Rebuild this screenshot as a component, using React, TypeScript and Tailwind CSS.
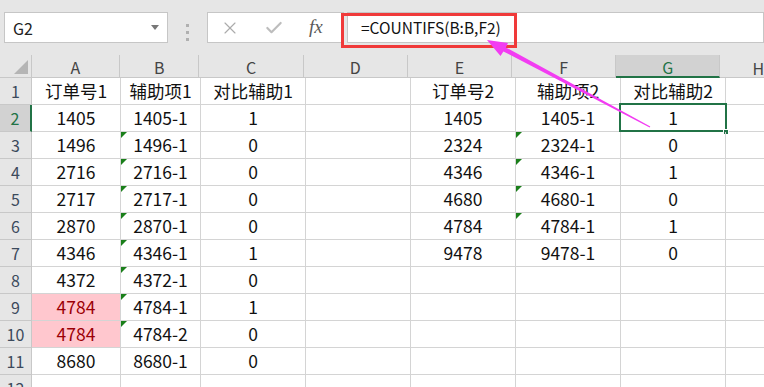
import { X, Check } from "lucide-react";

const cols = [
  { key: "A", w: "w-[89px]" },
  { key: "B", w: "w-[80px]" },
  { key: "C", w: "w-[105px]" },
  { key: "D", w: "w-[105px]" },
  { key: "E", w: "w-[105px]" },
  { key: "F", w: "w-[105px]" },
  { key: "G", w: "w-[105px]" },
];

type Cell = { v?: string; tri?: boolean; bad?: boolean; sel?: boolean };

const rows: Cell[][] = [
  [{ v: "订单号1" }, { v: "辅助项1" }, { v: "对比辅助1" }, {}, { v: "订单号2" }, { v: "辅助项2" }, { v: "对比辅助2" }],
  [{ v: "1405" }, { v: "1405-1" }, { v: "1" }, {}, { v: "1405" }, { v: "1405-1" }, { v: "1", sel: true }],
  [{ v: "1496" }, { v: "1496-1", tri: true }, { v: "0" }, {}, { v: "2324" }, { v: "2324-1", tri: true }, { v: "0" }],
  [{ v: "2716" }, { v: "2716-1", tri: true }, { v: "0" }, {}, { v: "4346" }, { v: "4346-1", tri: true }, { v: "1" }],
  [{ v: "2717" }, { v: "2717-1", tri: true }, { v: "0" }, {}, { v: "4680" }, { v: "4680-1", tri: true }, { v: "0" }],
  [{ v: "2870" }, { v: "2870-1", tri: true }, { v: "0" }, {}, { v: "4784" }, { v: "4784-1", tri: true }, { v: "1" }],
  [{ v: "4346" }, { v: "4346-1", tri: true }, { v: "1" }, {}, { v: "9478" }, { v: "9478-1" }, { v: "0" }],
  [{ v: "4372" }, { v: "4372-1", tri: true }, { v: "0" }, {}, {}, {}, {}],
  [{ v: "4784", bad: true }, { v: "4784-1", tri: true }, { v: "1" }, {}, {}, {}, {}],
  [{ v: "4784", bad: true }, { v: "4784-2", tri: true }, { v: "0" }, {}, {}, {}, {}],
  [{ v: "8680" }, { v: "8680-1" }, { v: "0" }, {}, {}, {}, {}],
  [{}, {}, {}, {}, {}, {}, {}],
];

export default function App() {
  return (
    <div className="relative w-[764px] h-[387px] overflow-hidden bg-white text-[#111] font-['Noto_Sans_CJK_SC','Noto_Sans',sans-serif]">
      {/* formula bar */}
      <div className="flex h-[55px] bg-[#e6e6e6] pt-[12px] pl-[4px]">
        <div className="relative flex h-[31px] w-[164px] items-center border border-[#c6c6c6] bg-white pl-[8px] text-[16px] text-[#222]">
          G2
          <span className="absolute right-[8px] top-[12px] h-0 w-0 border-x-[4px] border-t-[5px] border-x-transparent border-t-[#777]" />
        </div>
        <div className="flex w-[39px] flex-col items-center justify-center gap-[4px] pb-[2px]">
          <span className="h-[3px] w-[3px] bg-[#b0b0b0]" />
          <span className="h-[3px] w-[3px] bg-[#b0b0b0]" />
          <span className="h-[3px] w-[3px] bg-[#b0b0b0]" />
        </div>
        <div className="flex h-[31px] w-[137px] items-center border border-[#c6c6c6] bg-white">
          <X className="ml-[12px] h-[20px] w-[20px] text-[#ababab]" strokeWidth={1.4} />
          <Check className="ml-[24px] h-[20px] w-[20px] text-[#bdbdbd]" strokeWidth={2.6} />
          <span className="ml-[25px] font-['Liberation_Serif',serif] text-[19px] italic text-[#5a5a5a]">
            fx
          </span>
        </div>
        <div className="ml-[3px] flex h-[31px] flex-1 items-center border border-[#c6c6c6] bg-white pl-[13px] text-[15.5px] text-[#111]">
          =COUNTIFS(B:B,F2)
        </div>
      </div>

      {/* column headers */}
      <div className="flex h-[23px] bg-[#e6e6e6] text-[16px] text-[#444]">
        <div className="relative w-[32px] border-r border-b border-[#c8c8c8]">
          <svg className="absolute bottom-[3px] right-[3px]" width="14" height="14" viewBox="0 0 14 14">
            <polygon points="14,0 14,14 0,14" fill="#b5b5b5" />
          </svg>
        </div>
        {cols.map((c) =>
          c.key === "G" ? (
            <div
              key={c.key}
              className={`${c.w} flex items-center justify-center border-r border-b-2 border-r-[#c8c8c8] border-b-[#217346] bg-[#d2d2d2] pt-[2px] text-[#217346]`}
            >
              {c.key}
            </div>
          ) : (
            <div
              key={c.key}
              className={`${c.w} flex items-center justify-center border-r border-b border-[#c8c8c8] pt-[2px]`}
            >
              {c.key}
            </div>
          )
        )}
        <div className="flex-1 border-b border-[#c8c8c8] pl-[32px] pt-[1px]">H</div>
      </div>

      {/* rows */}
      {rows.map((r, i) => (
        <div key={i} className="flex h-[27px] text-[17.5px]">
          {i === 1 ? (
            <div className="flex w-[32px] items-center justify-center border-r-2 border-b border-r-[#217346] border-b-[#c8c8c8] bg-[#d2d2d2] text-[16px] text-[#217346]">
              {i + 1}
            </div>
          ) : (
            <div className="flex w-[32px] items-center justify-center border-r border-b border-[#c8c8c8] bg-[#e6e6e6] text-[16px] text-[#3c4a5c]">
              {i + 1}
            </div>
          )}
          {r.map((c, j) => (
            <div
              key={j}
              className={`${cols[j].w} relative flex items-center justify-center border-r border-b border-[#d4d4d4] ${
                c.bad ? "bg-[#ffc7ce] text-[#9c0006]" : ""
              }`}
            >
              {c.tri && (
                <span className="absolute left-0 top-0 h-0 w-0 border-r-[6px] border-t-[6px] border-r-transparent border-t-[#1a7f1a]" />
              )}
              {c.v}
              {c.sel && (
                <>
                  <span className="absolute -left-[2px] -top-[2px] -right-[2px] -bottom-[1px] border-2 border-[#217346]" />
                  <span className="absolute -bottom-[4px] -right-[4px] h-[6px] w-[6px] border border-white bg-[#217346]" />
                </>
              )}
            </div>
          ))}
          <div className="flex-1 border-b border-[#d4d4d4]" />
        </div>
      ))}

      {/* annotation: red box + arrow */}
      <div className="absolute left-[341px] top-[13px] h-[35px] w-[176px] border-[3px] border-[#f03a3a]" />
      <svg className="absolute left-0 top-0" width="764" height="387" viewBox="0 0 764 387">
        <polygon
          points="487,40 508,43 505.8,47.4 650.3,126.5 649.7,127.5 503.4,51.4 500.5,56"
          fill="#f23cf2"
        />
      </svg>
    </div>
  );
}
